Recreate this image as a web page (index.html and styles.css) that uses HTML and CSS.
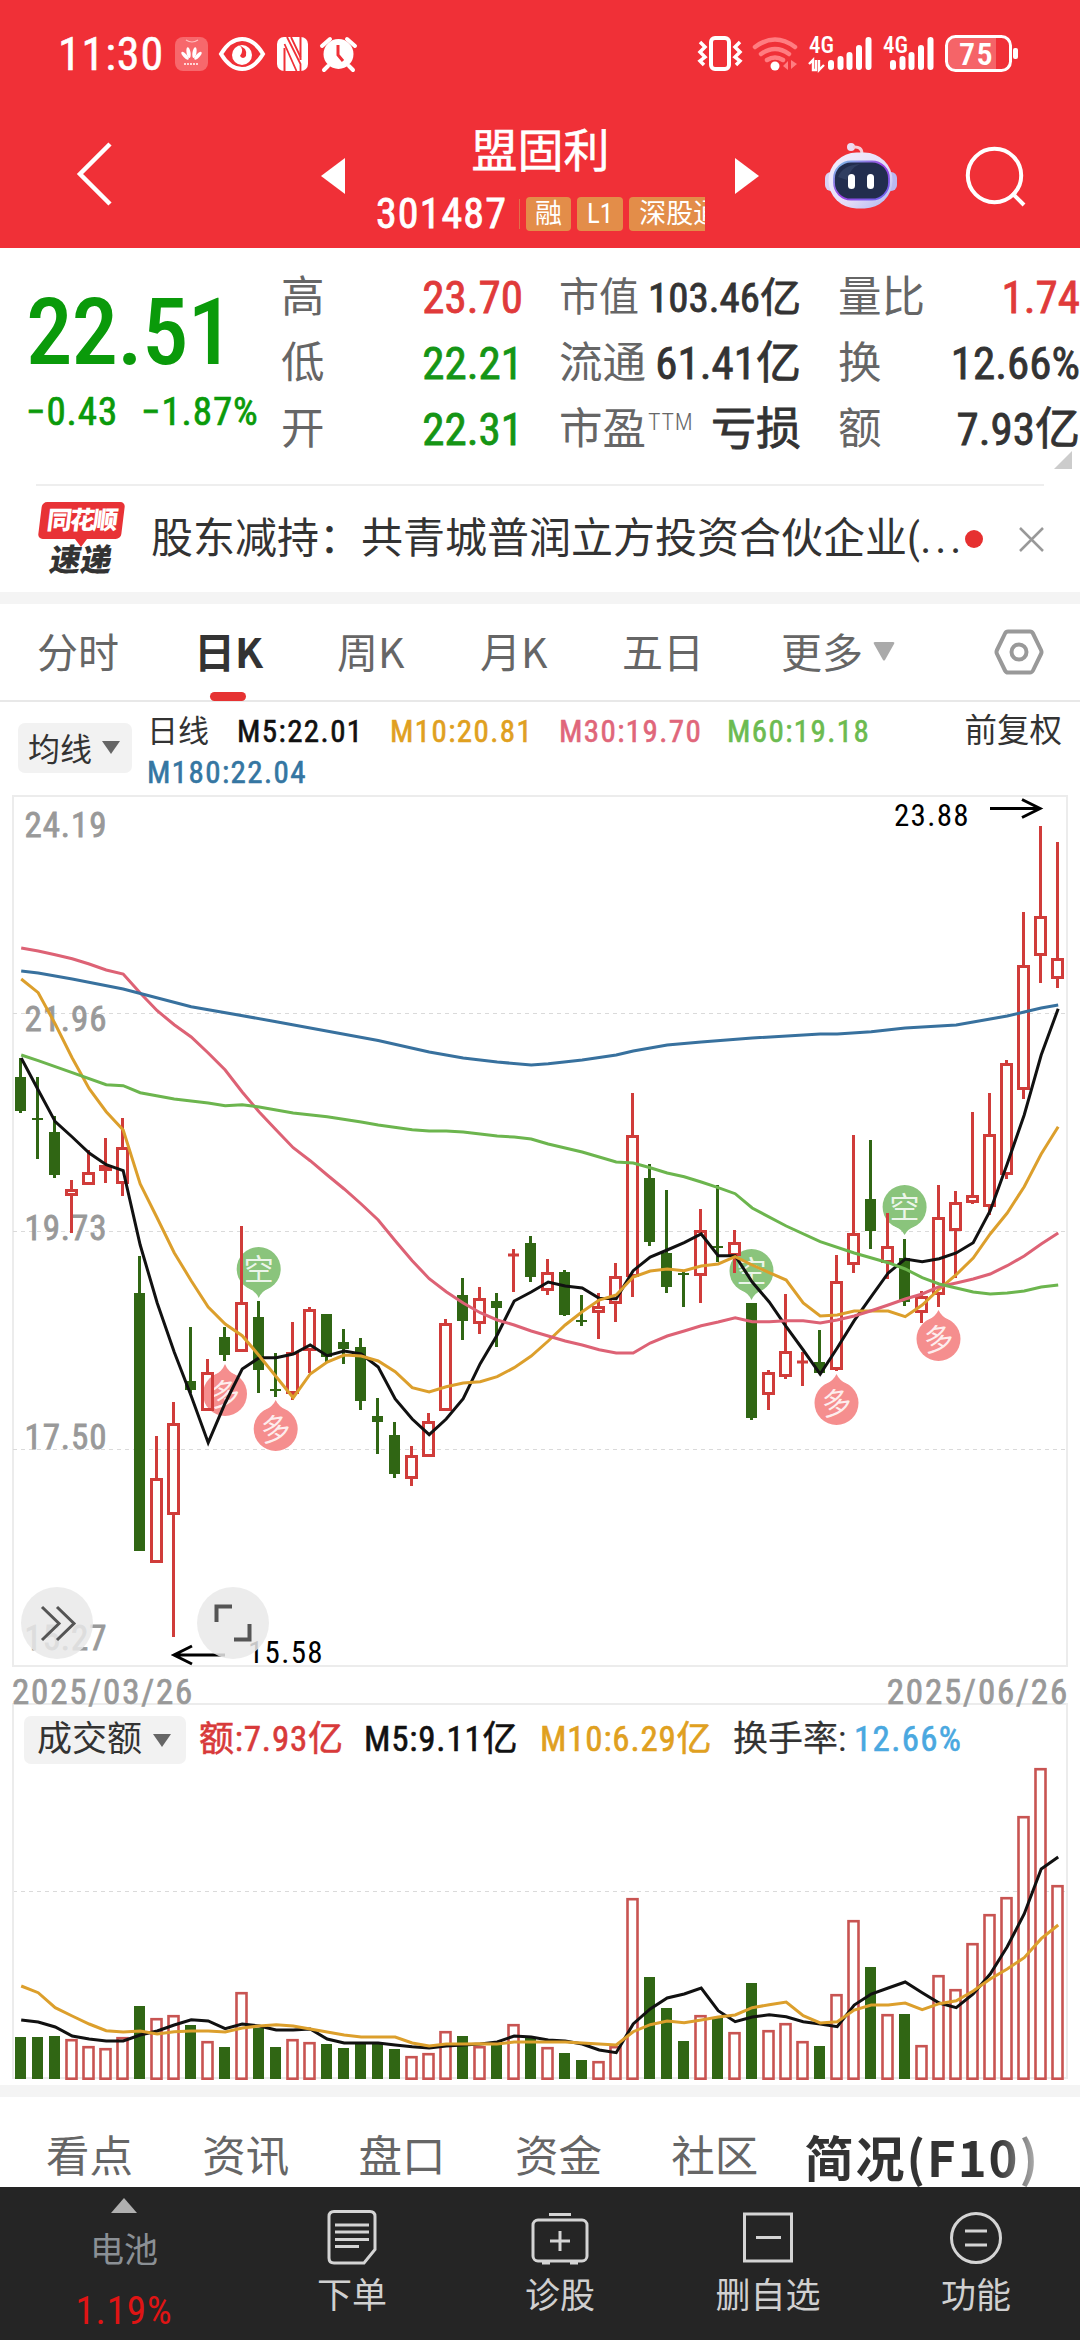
FILE: index.html
```html
<!DOCTYPE html>
<html lang="zh-CN">
<head>
<meta charset="utf-8">
<title>盟固利 301487</title>
<link rel="stylesheet" href="styles.css">
</head>
<body>
<header class="header">
  <div class="status">
    <span class="clock">11:30</span>
    <svg class="status-left" width="190" height="40" viewBox="170 34 190 40">
      <rect x="175" y="37" width="33" height="34" rx="8" fill="#f7686c"/>
      <path d="M186 40q6 4 12 0" fill="none" stroke="#ffc0c0" stroke-width="1.2"/>
      <g fill="#fff"><ellipse cx="189.5" cy="52.500" rx="2" ry="5.500" transform="rotate(-10 189.500 58)"/><ellipse cx="193.500" cy="52.500" rx="2" ry="5.500" transform="rotate(10 193.500 58)"/><ellipse cx="188" cy="53.500" rx="1.900" ry="5" transform="rotate(-42 189.500 58.500)"/><ellipse cx="195" cy="53.500" rx="1.900" ry="5" transform="rotate(42 193.500 58.500)"/></g>
      <path d="M184 64h15" stroke="#ffd5d5" stroke-width="2" stroke-dasharray="2 1"/>
      <path d="M221 54Q230 39 242 39T263 54Q254 69 242 69T221 54z" fill="none" stroke="#fff" stroke-width="4"/>
      <circle cx="242" cy="55" r="10" fill="#fff"/>
      <path d="M238 44q7 5 2 12 3 4 6 0 1-4-1-7z" fill="#f03037"/>
      <rect x="277" y="37" width="31" height="34" rx="7" fill="#fff"/>
      <path d="M284.500 71V48M300.500 37v23" fill="none" stroke="#f03037" stroke-width="2"/>
      <path d="M287 37l13.500 27V71M284.500 44l12 27M291 37l9.500 20" fill="none" stroke="#f03037" stroke-width="1.800"/>
      <circle cx="338.500" cy="54" r="15" fill="#fff"/>
      <path d="M322 46l8-7M355 46l-8-7M328 66l-4 4M349 66l4 4" stroke="#fff" stroke-width="4" stroke-linecap="round"/>
      <path d="M338 45v10l5 6" fill="none" stroke="#f03037" stroke-width="3"/>
    </svg>
    <svg class="status-right" width="335" height="42" viewBox="694 33 335 42">
      <rect x="711" y="38" width="18" height="31" rx="4" fill="none" stroke="#fff" stroke-width="4"/>
      <path d="M700 42l5 5-5 5 5 5-5 4 4 4M740 42l-5 5 5 5-5 5 5 4-4 4" fill="none" stroke="#fff" stroke-width="3.500"/>
      <g fill="none" stroke="#ff7d81" stroke-width="4.500" stroke-linecap="round"><path d="M755 47q20-15 40 0M761 54q14-10 28 0M767 60q8-5 16 0"/></g>
      <circle cx="775" cy="66" r="4.500" fill="#fff"/>
      <path d="M783 66l5-5v9zM797 64l-6-4v9z" fill="#ff7d81"/>
      <g fill="#fff" font-family="Roboto Condensed, Roboto, sans-serif" font-weight="500" font-size="23"><text x="809" y="53">4G</text><text x="883" y="53">4G</text></g>
      <path d="M809 64l4-4v10h3V60M819 60v10l5-5" fill="none" stroke="#fff" stroke-width="2.400"/>
      <g stroke="#fff" stroke-width="6" stroke-linecap="round"><path d="M831 63v4M840.500 59v8M849.500 55v12M859 48v19M868.500 40v27M893 63v4M902.500 59v8M911.500 55v12M921 48v19M930.500 40v27"/></g>
      <rect x="948" y="38" width="48" height="32" fill="#f56468"/>
      <rect x="946.500" y="36.500" width="64" height="34" rx="9" fill="none" stroke="#fff" stroke-width="3"/>
      <rect x="1013" y="48" width="5" height="11" rx="2" fill="#fff"/>
      <text x="959" y="65" fill="#fff" font-family="Roboto Condensed, Roboto, sans-serif" font-size="32" font-weight="600" letter-spacing="1.500">75</text>
    </svg>
  </div>
  <div class="nav">
    <svg class="back" width="42" height="68" viewBox="0 0 42 68"><path d="M37 4L7 34l30 30" fill="none" stroke="#fff" stroke-width="4.500"/></svg>
    <svg class="prev" width="24" height="36" viewBox="0 0 24 36"><path d="M24 0v36L0 18z" fill="#fff"/></svg>
    <div class="stock">
      <div class="name">盟固利</div>
      <div class="code-row">
        <span class="code">301487</span>
        <i class="sep"></i>
        <span class="badge">融</span><span class="badge">L1</span><span class="badge">深股通</span>
      </div>
    </div>
    <svg class="next" width="24" height="36" viewBox="0 0 24 36"><path d="M0 0v36l24-18z" fill="#fff"/></svg>
    <svg class="robot" width="76" height="70" viewBox="822 139 76 70">
      <defs><linearGradient id="shell" x1="0" y1="0" x2="1" y2="1"><stop offset="0" stop-color="#f4effd"/><stop offset=".6" stop-color="#e4dcf8"/><stop offset="1" stop-color="#a9b4ee"/></linearGradient>
      <linearGradient id="rim" x1="0" y1="0" x2="1" y2="1"><stop offset="0" stop-color="#7ccbea"/><stop offset=".5" stop-color="#9a3fe0"/><stop offset="1" stop-color="#6a6af0"/></linearGradient></defs>
      <circle cx="851" cy="145" r="4" fill="#ecdcf2"/><path d="M853 145q9-1 9 7" fill="none" stroke="#f6cdd8" stroke-width="3"/>
      <rect x="825" y="170" width="12" height="19" rx="6" fill="#d9d2f4"/><rect x="885" y="170" width="12" height="19" rx="6" fill="#b9b9f0"/>
      <rect x="828.500" y="150.500" width="64" height="56" rx="28" fill="url(#shell)"/>
      <rect x="834" y="159.500" width="55" height="38" rx="17" fill="#222d4e" stroke="url(#rim)" stroke-width="1.800"/>
      <path d="M838 175q5-12 22-13-10 4-13 16z" fill="#3b4a6e" opacity=".6"/>
      <rect x="848" y="172" width="7" height="15" rx="3.500" fill="#fff"/><rect x="867" y="172" width="7" height="15" rx="3.500" fill="#fff"/>
    </svg>
    <svg class="search" width="64" height="64" viewBox="964 144 64 64"><circle cx="994.500" cy="175.500" r="26.700" fill="none" stroke="#fff" stroke-width="4"/><path d="M1012 193l12 12" stroke="#fff" stroke-width="4"/></svg>
  </div>
</header>

<section class="quote">
  <div class="price-box">
    <div class="price">22.51</div>
    <div class="change"><span>−0.43</span><span>−1.87%</span></div>
  </div>
  <div class="col c1">
    <div class="row"><span class="k">高</span><span class="v up">23.70</span></div>
    <div class="row"><span class="k">低</span><span class="v down">22.21</span></div>
    <div class="row"><span class="k">开</span><span class="v down">22.31</span></div>
  </div>
  <div class="col c2">
    <div class="row"><span class="k narrow">市值</span><span class="v small">103.46亿</span></div>
    <div class="row"><span class="k">流通</span><span class="v">61.41亿</span></div>
    <div class="row"><span class="k">市盈<sup>TTM</sup></span><span class="v">亏损</span></div>
  </div>
  <div class="col c3">
    <div class="row"><span class="k">量比</span><span class="v up">1.74</span></div>
    <div class="row"><span class="k">换</span><span class="v">12.66%</span></div>
    <div class="row"><span class="k">额</span><span class="v">7.93亿</span></div>
    <svg class="corner" width="18" height="18" viewBox="0 0 18 18"><path d="M18 0v18H0z" fill="#ccc"/></svg>
  </div>
</section>

<section class="news">
  <div class="logo">
    <span class="logo-top">同花顺</span>
    <svg width="12" height="8" viewBox="0 0 12 8"><path d="M0 0h12L6 8z" fill="#e83236"/></svg>
    <span class="logo-bottom">速递</span>
  </div>
  <span class="headline">股东减持：共青城普润立方投资合伙企业(<b>...</b></span>
  <i class="dot"></i>
  <svg class="close" width="25" height="25" viewBox="0 0 25 25"><path d="M1 1l23 23M24 1L1 24" stroke="#999" stroke-width="2.500"/></svg>
</section>

<nav class="periods">
  <span>分时</span><span class="on">日K</span><span>周K</span><span>月K</span><span>五日</span>
  <span class="more">更多<svg width="22" height="19" viewBox="0 0 22 19"><path d="M2 0h18q2 0 1 2l-9 16q-1 1-2 0L1 2q-1-2 1-2z" fill="#aaa"/></svg></span>
  <svg class="gear" width="50" height="48" viewBox="0 0 50 48"><path d="M14 3.500h22q2 0 3 2l8 16.500q1 2 0 4l-8 16.500q-1 2-3 2H14q-2 0-3-2L3 26q-1-2 0-4l8-16.500q1-2 3-2z" fill="none" stroke="#999" stroke-width="4"/><circle cx="25" cy="24" r="7.500" fill="none" stroke="#999" stroke-width="4"/></svg>
</nav>

<section class="ma">
  <span class="pill">均线<svg width="18" height="13" viewBox="0 0 18 13"><path d="M0 0h18L9 13z" fill="#666"/></svg></span>
  <div class="ma-list">
    <span class="ma-name">日线</span><span class="m5">M5:22.01</span><span class="m10">M10:20.81</span><span class="m30">M30:19.70</span><span class="m60">M60:19.18</span><span class="m180">M180:22.04</span>
  </div>
  <span class="adjust">前复权</span>
</section>

<svg class="kchart" id="kchart" width="1080" height="876" viewBox="0 792 1080 876"></svg>

<div class="dates"><span>2025/03/26</span><span>2025/06/26</span></div>

<section class="volume">
  <div class="vol-legend">
    <span class="pill">成交额<svg width="18" height="13" viewBox="0 0 18 13"><path d="M0 0h18L9 13z" fill="#666"/></svg></span>
    <span class="l1">额:7.93亿</span><span class="l2">M5:9.11亿</span><span class="l3">M10:6.29亿</span><span class="l4">换手率:</span><span class="l5">12.66%</span>
  </div>
  <svg id="vchart" width="1080" height="316" viewBox="0 1765 1080 316"></svg>
</section>

<nav class="tabs">
  <span>看点</span><span>资讯</span><span>盘口</span><span>资金</span><span>社区</span><span class="on">简况(F10)</span>
</nav>

<footer class="bottom">
  <div class="ticker">
    <svg width="26" height="15" viewBox="0 0 26 15"><path d="M13 0l13 15H0z" fill="#b0b0b0"/></svg>
    <span class="sector">电池</span><span class="pct">1.19%</span>
  </div>
  <div class="item"><svg width="60" height="60" viewBox="0 0 60 60"><g fill="none" stroke="#d4d4d4" stroke-width="3"><path d="M12 4.500h36q5 0 5 5v33L42 56H12q-5 0-5-5V9.500q0-5 5-5z"/><path d="M13 18h34M13 25h34M13 32.500h34M13 39.500h24"/></g></svg><span>下单</span></div>
  <div class="item"><svg width="60" height="60" viewBox="0 0 60 60"><g fill="none" stroke="#d4d4d4" stroke-width="3"><rect x="3" y="13" width="54" height="41" rx="5"/><path d="M19 7.500h22M12 56h8M40 56h8M20 34h20M30 24v20"/></g></svg><span>诊股</span></div>
  <div class="item"><svg width="60" height="60" viewBox="0 0 60 60"><g fill="none" stroke="#d4d4d4" stroke-width="3"><rect x="6.500" y="7" width="47" height="47"/><path d="M18 30.500h25"/></g></svg><span>删自选</span></div>
  <div class="item"><svg width="60" height="60" viewBox="0 0 60 60"><g fill="none" stroke="#d4d4d4" stroke-width="3"><circle cx="30" cy="31" r="24.500"/><path d="M19 24h22M19 38h22"/></g></svg><span>功能</span></div>
</footer>
<script src="charts.js"></script>
</body>
</html>
```
FILE: styles.css
```css
*{box-sizing:border-box}
body{margin:0;width:1080px;height:2340px;overflow:hidden;background:#fff;color:#333;font-family:"Roboto Condensed",Roboto,"Noto Sans CJK SC",sans-serif}
svg{display:block;flex:none}
span{white-space:nowrap}
.header{height:248px;background:#f03037;color:#fff}
.status{height:104px;display:flex;align-items:flex-start;padding:33px 51px 0 58px}
.clock{font-size:46px;line-height:42px;width:112px;letter-spacing:.9px;-webkit-text-stroke:.5px}
.status-left{margin-top:1px}
.status-right{margin-left:auto}
.nav{height:144px;display:flex;align-items:center;padding-left:73px}
.back{margin-top:-4px}
.prev{margin-left:206px}
.stock{width:329px;margin:-2px 30px 0 31px;overflow:hidden}
.name{font-size:46px;line-height:62px;text-align:center;-webkit-text-stroke:.6px}
.code-row{margin-top:15px;height:34px;display:flex;align-items:center}
.code{flex:none;font-size:42px;line-height:34px;letter-spacing:1.1px;width:143px;-webkit-text-stroke:.8px}
.sep{flex:none;width:1px;height:30px;background:#e0704a;margin-right:6px}
.badge{flex:none;background:#e38d49;border-radius:4px;font-size:27px;line-height:34px;padding:0 9px;margin-right:6px}
.badge+.badge{padding:0 10px}
.robot{margin-left:63px}
.search{margin-left:66px}

.quote{height:236px;display:flex;padding:17px 0 0 26px}
.price-box{width:255px;color:#0a9a0a;padding-top:22px}
.price{font-size:93px;line-height:92px;font-weight:500;letter-spacing:-1px}
.change{margin-top:14px;display:flex;gap:23px;font-size:39px;line-height:38px;letter-spacing:.9px;-webkit-text-stroke:.7px}
.col{width:242px}
.c2{margin-left:36px}
.c3{margin-left:37px;position:relative}
.row{height:66px;display:flex;justify-content:space-between;align-items:center}
.k{font-size:43.5px;line-height:66px;color:#666}
.k.narrow{font-size:40px}
.k sup{font-size:24px;line-height:24px;font-weight:300;vertical-align:14px;margin-left:2px;letter-spacing:.8px}
.v{font-size:45px;line-height:66px;-webkit-text-stroke:.8px}
.v.small{font-size:41px}
.up{color:#e03a3a}
.down{color:#159515}
.corner{position:absolute;right:8px;top:186px}

.news{height:108px;margin:0 36px;border-top:2px solid #eee;display:flex;align-items:center}
.logo{width:90px;margin:-1px 25px 0 0;display:flex;flex-direction:column;align-items:center}
.logo-top{background:#e83236;color:#fff;font-weight:900;font-size:25px;line-height:37px;width:83px;text-align:center;border-radius:5px;transform:skewX(-7deg);letter-spacing:-2px}
.logo-bottom{font-weight:900;font-size:31px;line-height:28px;transform:skewX(-10deg)}
.headline{font-size:42px;line-height:60px;width:814px}
.headline b{font-weight:400;letter-spacing:4px}
.dot{width:18px;height:18px;border-radius:50%;background:#e63030}
.close{margin-left:auto}

.periods{height:110px;border-top:12px solid #f4f4f4;border-bottom:2px solid #e8e8e8;display:grid;grid-template-columns:157px 143px 143px 142px 159px 213px 50px;font-family:"Noto Sans CJK SC",sans-serif;font-size:41px;line-height:92px;color:#666;padding-left:37px}
.periods span{height:96px}
.more{display:flex;gap:10px}
.more svg{margin-top:38px}
.periods .on{color:#333;font-weight:700;position:relative}
.periods .on::after{content:"";position:absolute;left:16px;bottom:-1px;width:36px;height:9px;border-radius:5px;background:#e63232}
.gear{align-self:center}

.ma{height:90px;display:flex;align-items:flex-start;padding:9px 18px 0}
.pill{background:#f2f2f2;border-radius:7px;display:flex;align-items:center;justify-content:space-between}
.ma .pill{width:114px;height:50px;margin-top:12px;padding:0 12px 2px 10px;font-size:32px}
.ma-list{width:800px;margin-left:15px;display:grid;grid-template-columns:90px 153px 169px 168px 1fr;font-size:31px;line-height:41px;letter-spacing:1.4px;-webkit-text-stroke:.6px}
.ma-name{letter-spacing:0;-webkit-text-stroke:0}
.m5,.l2{color:#111}
.m10,.l3{color:#e0a020}
.m30{color:#e0667a}
.m60{color:#6cbb50}
.m180{color:#3576a2;grid-column:1/3}
.adjust{font-size:32.5px;line-height:41px;margin-left:auto}

.dates{height:35px;display:flex;justify-content:space-between;padding:0 11px 0 12px;font-size:35px;line-height:50px;color:#999;letter-spacing:1.8px;-webkit-text-stroke:.7px}
.volume{height:394px;border-bottom:12px solid #f4f4f4}
.vol-legend{height:62px;display:flex;align-items:center;margin:0 12px;padding:10px 0 0 10px;border:2px solid #ececec;border-bottom:0;font-size:35px;line-height:48px;letter-spacing:.8px;-webkit-text-stroke:.6px}
.vol-legend .pill{width:162px;height:48px;padding:0 15px 0 13px;letter-spacing:0;-webkit-text-stroke:0}
.l1{color:#d83a3a;width:165px;margin-left:13px}
.l2{width:176px}
.l3{width:193px}
.l4{width:121px;letter-spacing:0;-webkit-text-stroke:.2px}
.l5{color:#4aa8e0;letter-spacing:1.3px}

.tabs{height:90px;display:flex;padding:8px 0 0 46px;font-size:43.5px;line-height:106px;color:#666}
.tabs span{width:156.3px}
.tabs .on{width:auto;margin-left:-23px;font-family:"Noto Sans CJK SC",sans-serif;font-size:49px;line-height:101px;letter-spacing:2px;font-weight:700;background:linear-gradient(90deg,#333 82%,#bbb);-webkit-background-clip:text;background-clip:text;color:transparent}

.bottom{height:153px;background:#252525;display:grid;grid-template-columns:248px repeat(4,208px);color:#d0d0d0}
.ticker{display:flex;flex-direction:column;align-items:center;padding-top:11px}
.sector{font-size:34px;line-height:44px;color:#8b9095;margin-top:15px}
.pct{font-size:39px;line-height:44px;color:#e01414;margin-top:17px;letter-spacing:.9px}
.bottom .item{display:flex;flex-direction:column;align-items:center;padding-top:20px;font-size:35px;line-height:48px}
.item span{margin-top:6px}
```
FILE: charts.js
```
const RED = '#d03c3a', GREEN = '#306614';
const X = i => 20.5 + 17 * i;
// direction (1 up, 0 down), high, body top, body bottom, low
const days = [
[0,1058,1077,1111,1113],[0,1077,1118,1120,1159],[0,1116,1132,1175,1178],[1,1180,1189,1196,1233],[1,1150,1172,1185,1185],[1,1138,1165,1171,1183],[1,1118,1147,1184,1196],
[0,1256,1293,1551,1551],[1,1436,1478,1563,1563],[1,1402,1423,1515,1637],[0,1327,1381,1390,1393],[1,1359,1372,1411,1411],[0,1327,1337,1355,1361],[1,1226,1302,1352,1352],
[0,1301,1317,1370,1393],[0,1353,1389,1391,1397],[1,1322,1352,1394,1400],[1,1307,1309,1351,1373],[0,1314,1314,1357,1362],[0,1329,1342,1349,1364],[0,1338,1347,1401,1410],
[0,1398,1416,1422,1454],[0,1422,1435,1474,1478],[1,1446,1455,1479,1486],[1,1413,1421,1457,1457],[1,1319,1323,1411,1411],[0,1278,1295,1321,1340],[1,1287,1298,1324,1334],
[0,1293,1301,1308,1347],[1,1249,1253.5,1256.5,1292],[0,1236,1243,1277,1282],[1,1259,1272,1291,1295],[0,1270,1272,1315,1316],[0,1295,1320,1322,1326],[1,1293,1306,1313,1339],
[1,1263,1276,1304,1322],[1,1093,1135,1277,1297],[0,1164,1178,1242,1246],[0,1190,1253,1287,1293],[0,1271,1273,1275,1307],[1,1209,1230,1276,1303],[0,1185,1246,1248,1262],
[1,1230,1242,1256,1273],[0,1303,1303,1418,1420],[1,1370,1372,1395,1410],[1,1294,1351,1377,1379],[1,1352,1360.5,1363.5,1386],[0,1330,1362,1373,1373],[1,1255,1281,1370,1371],
[1,1135,1233,1265,1273],[0,1140,1199,1231,1249],[1,1213,1246,1263,1279],[0,1239,1258,1302,1306],[1,1291,1296,1313,1323],[1,1185,1217,1295,1307],[1,1191,1202,1231,1278],
[1,1112,1195,1203,1204],[1,1093,1134,1207,1215],[1,1060,1063,1175,1179],[1,912,965,1090,1099],[1,826,916,956,983],[1,842,958,979,988]];
const ma5 = [1058,1090,1121.6,1137,1153,1164.7,1170.7,1245,1303,1352,1396,1442.7,1403,1369,1357.7,1357.7,1354,1345,1355.7,1351,1354,1367,1399,1419,1434.7,1419,1398.7,1363.7,1335,1301,1292,1282,1286,1288,1298.3,1298.7,1270.7,1257,1250,1242.7,1234,1255.7,1255.7,1282,1302,1326.7,1350,1374,1348,1320.7,1296.7,1273,1259,1261.7,1258.7,1253,1242.7,1210.7,1164,1115,1055,1008.7];
const ma10 = [979,992.7,1024,1058,1088.7,1111.7,1130,1184,1218,1252.7,1280.7,1307,1324,1335.7,1355.7,1376.7,1397.7,1374,1362,1355,1356,1361,1371.7,1387.7,1392,1386.7,1383,1381.7,1376.7,1367.7,1356,1341,1325,1311.7,1300,1295,1277,1271,1269,1270.7,1266,1264,1256.7,1265,1272.7,1280,1303,1316,1315,1311,1311,1311,1316.7,1305,1289,1274.7,1258,1234,1213,1186.7,1154,1126.7];
const ma30 = [948,951,954.7,958.7,964,970,974,993,1010.7,1024.7,1037,1053,1070,1092,1112,1130,1147.7,1160.7,1175,1189,1204,1220,1240.7,1260.7,1278.7,1291.7,1303,1312.7,1320,1325,1331,1336,1341,1345,1349.7,1353,1353,1343,1336,1331,1325.7,1322,1317.7,1321.7,1321.7,1320.7,1320.7,1323,1320,1316,1310.7,1305,1299,1294,1286.7,1283,1279,1274,1265.7,1256,1244,1233];
const ma60 = [[0,1055],[1,1060.7],[3,1072.7],[5,1084.7],[6,1085.7],[7,1092.7],[9,1099],[11,1103],[12,1105.7],[13,1104.7],[14,1107],[16,1113],[18,1116.7],[20,1122],[21,1125],[23,1129.7],[24,1131],[25,1131],[26,1132],[28,1136],[29,1137],[30,1139],[31,1144],[33,1152],[35,1162],[36,1163],[37,1167.7],[38,1173],[39,1176.7],[40,1182],[41,1187.7],[42,1193.7],[43,1208],[45,1226],[47,1241.7],[49,1253],[51,1262.7],[52,1269],[53,1277.7],[54,1284],[56,1292],[57,1294],[58,1293],[59,1291],[60,1287],[61,1285]];
const ma180 = [[0,971],[1,973],[3,979],[6,989],[10,1006.7],[15,1021.7],[21,1040.5],[24,1052],[26,1058],[28,1062],[30,1065],[31,1063.7],[33,1060],[35,1055],[36,1051],[38,1045],[40,1042],[43,1038],[47,1034],[48,1034],[50,1031.7],[52,1028],[54,1026],[55,1025],[57,1019],[58,1016],[59,1012],[60,1008],[61,1005]];
const volTop = [2037,2037,2036,2039,2046,2048,2037,2006,2018,2015,2025,2041,2047,1992,2028,2047,2039,2042,2044,2048,2044,2044,2049,2056,2053,2031,2036,2046,2045,2024,2038,2047,2053,2060,2061,2046,1898,1977,2008,2041,2015,2018,2032,1983,2030,2023,2041,2046,1994,1920,1967,2014,2014,2045,1975,1989,1943,1914,1897,1816,1768,1885];
const volMa5 = [2020,2022,2027,2036,2039,2041,2041,2035,2031,2025,2019.7,2021,2028.7,2024,2026,2030,2030,2029,2039,2043,2043,2043,2045,2046.7,2048,2046,2045,2044,2042,2036,2037,2040,2041,2044,2050,2052.7,2024,2009,1998,1994,1988,2010.7,2021.7,2017,2014.7,2016.7,2021.7,2024,2026.7,2005,1994,1988,1982,1992.7,2003,2007.7,1994,1974,1946.7,1914,1869,1857];
const volMa10 = [1986,1992.7,2007.7,2016,2024,2030.7,2032,2031,2034,2031.7,2031,2031,2032,2028,2026,2024.7,2026,2029,2032,2035,2037,2037,2037,2043,2046,2044,2044,2043.7,2044,2042,2042,2042,2042,2043,2044,2045,2031.7,2024.7,2021,2022.7,2020,2017,2015,2007.7,2004.7,2002,2015.7,2023,2021.7,2010,2005,2005,2003,2009.7,2003.7,2000.7,1991,1979,1969,1957.7,1938.7,1925];

const line = (data, color, w) => `<polyline points="${data.map((d, i) => Array.isArray(d) ? `${X(d[0]) + .7},${d[1]}` : `${X(i) + .7},${d}`).join(' ')}" fill="none" stroke="${color}" stroke-width="${w}"/>`;
const grid = y => `<path d="M13 ${y}H1066" stroke="#dadada" stroke-width="1" stroke-dasharray="4 4"/>`;
const candle = ([up, hi, top, bot, lo], i) => {
  const x = X(i);
  if (!up) return `<path d="M${x} ${hi}V${lo}" stroke="${GREEN}" stroke-width="3"/><rect x="${x - 5.5}" y="${top}" width="11" height="${bot - top}" fill="${GREEN}"/>`;
  const h = bot - top;
  if (h <= 3) return `<path d="M${x} ${hi}V${lo}M${x - 5.5} ${top + 1.5}h11" stroke="${RED}" stroke-width="3"/>`;
  return `<path d="M${x} ${hi}V${top}M${x} ${bot}V${lo}" stroke="${RED}" stroke-width="3"/><rect x="${x - 5}" y="${top + 1.5}" width="10" height="${h - 3}" fill="${h > 6 ? 'none' : RED}" stroke="${RED}" stroke-width="3"/>`;
};
const mark = (x, y, tip, ch, color) => {
  const s = tip < y ? -1 : 1;
  return `<path d="M${x - 12} ${y + s * 18}Q${x - 3} ${y + s * 22} ${x} ${tip}Q${x + 3} ${y + s * 22} ${x + 12} ${y + s * 18}z" fill="${color}"/><circle cx="${x}" cy="${y}" r="22" fill="${color}"/><text x="${x}" y="${y + 11}" text-anchor="middle" font-family="Noto Sans CJK SC, sans-serif" font-size="30" fill="#fff" fill-opacity=".85"${s < 0 ? ` transform="rotate(-8 ${x} ${y})"` : ''}>${ch}</text>`;
};
const num = (x, y, t, size, color, stroke, spacing) => `<text x="${x}" y="${y}" font-family="Roboto Condensed, Roboto, sans-serif" font-size="${size}" fill="${color}" stroke="${color}" stroke-width="${stroke}" letter-spacing="${spacing}">${t}</text>`;
const LONG = '#f58e8e', SHORT = '#8ac47c';

document.getElementById('kchart').innerHTML =
  '<rect x="13" y="796" width="1054" height="870" fill="none" stroke="#ececec" stroke-width="2"/>' +
  [1013.5, 1231.5, 1449.5].map(grid).join('') +
  [[837, '24.19'], [1030.5, '21.96'], [1240, '19.73'], [1449, '17.50'], [1650, '15.27']].map(([y, t]) => num(24.5, y, t, 35, '#999', .8, .9)).join('') +
  mark(225, 1394, 1364, '多', LONG) + mark(275.7, 1429, 1400, '多', LONG) + mark(836.5, 1403, 1374, '多', LONG) + mark(938.5, 1339, 1310, '多', LONG) +
  mark(258.7, 1269, 1298, '空', SHORT) + mark(751.5, 1271, 1300, '空', SHORT) + mark(904.6, 1207, 1235, '空', SHORT) +
  days.map(candle).join('') +
  line(ma5, '#111', 3) + line(ma10, '#dc9f2c', 3) + line(ma30, '#dd6275', 3) + line(ma60, '#6cb54e', 3) + line(ma180, '#38719e', 3) +
  num(894, 826, '23.88', 31, '#000', 0, 1.3) + num(248, 1663, '15.58', 31, '#000', 0, 1.3) +
  '<path d="M990 808.500h49M1022 799.500l18 9-18 9M225 1655h-49M192 1646l-18 9 18 9" fill="none" stroke="#000" stroke-width="3"/>' +
  '<g fill="#e9e9e9" fill-opacity=".85"><circle cx="57" cy="1623" r="36"/><circle cx="233" cy="1623" r="36"/></g>' +
  '<g fill="none" stroke="#555"><path d="M42 1607l17 16.500-17 16.500M57 1607l17 16.500-17 16.500" stroke-width="3"/><path d="M216.500 1622v-15.500H232M249.500 1624v15.500H234" stroke-width="4"/></g>';

document.getElementById('vchart').innerHTML =
  grid(1891.5) + '<path d="M13 1765V2078H1067V1765" fill="none" stroke="#ececec" stroke-width="2"/>' +
  volTop.map((t, i) => days[i][0]
    ? `<rect x="${X(i) - 5}" y="${t + 1.2}" width="10" height="${2077.5 - t}" fill="#fff" stroke="#c85452" stroke-width="2.6"/>`
    : `<rect x="${X(i) - 5.5}" y="${t}" width="11" height="${2079 - t}" fill="${GREEN}"/>`).join('') +
  line(volMa5, '#111', 3) + line(volMa10, '#dc9f2c', 3);
```
